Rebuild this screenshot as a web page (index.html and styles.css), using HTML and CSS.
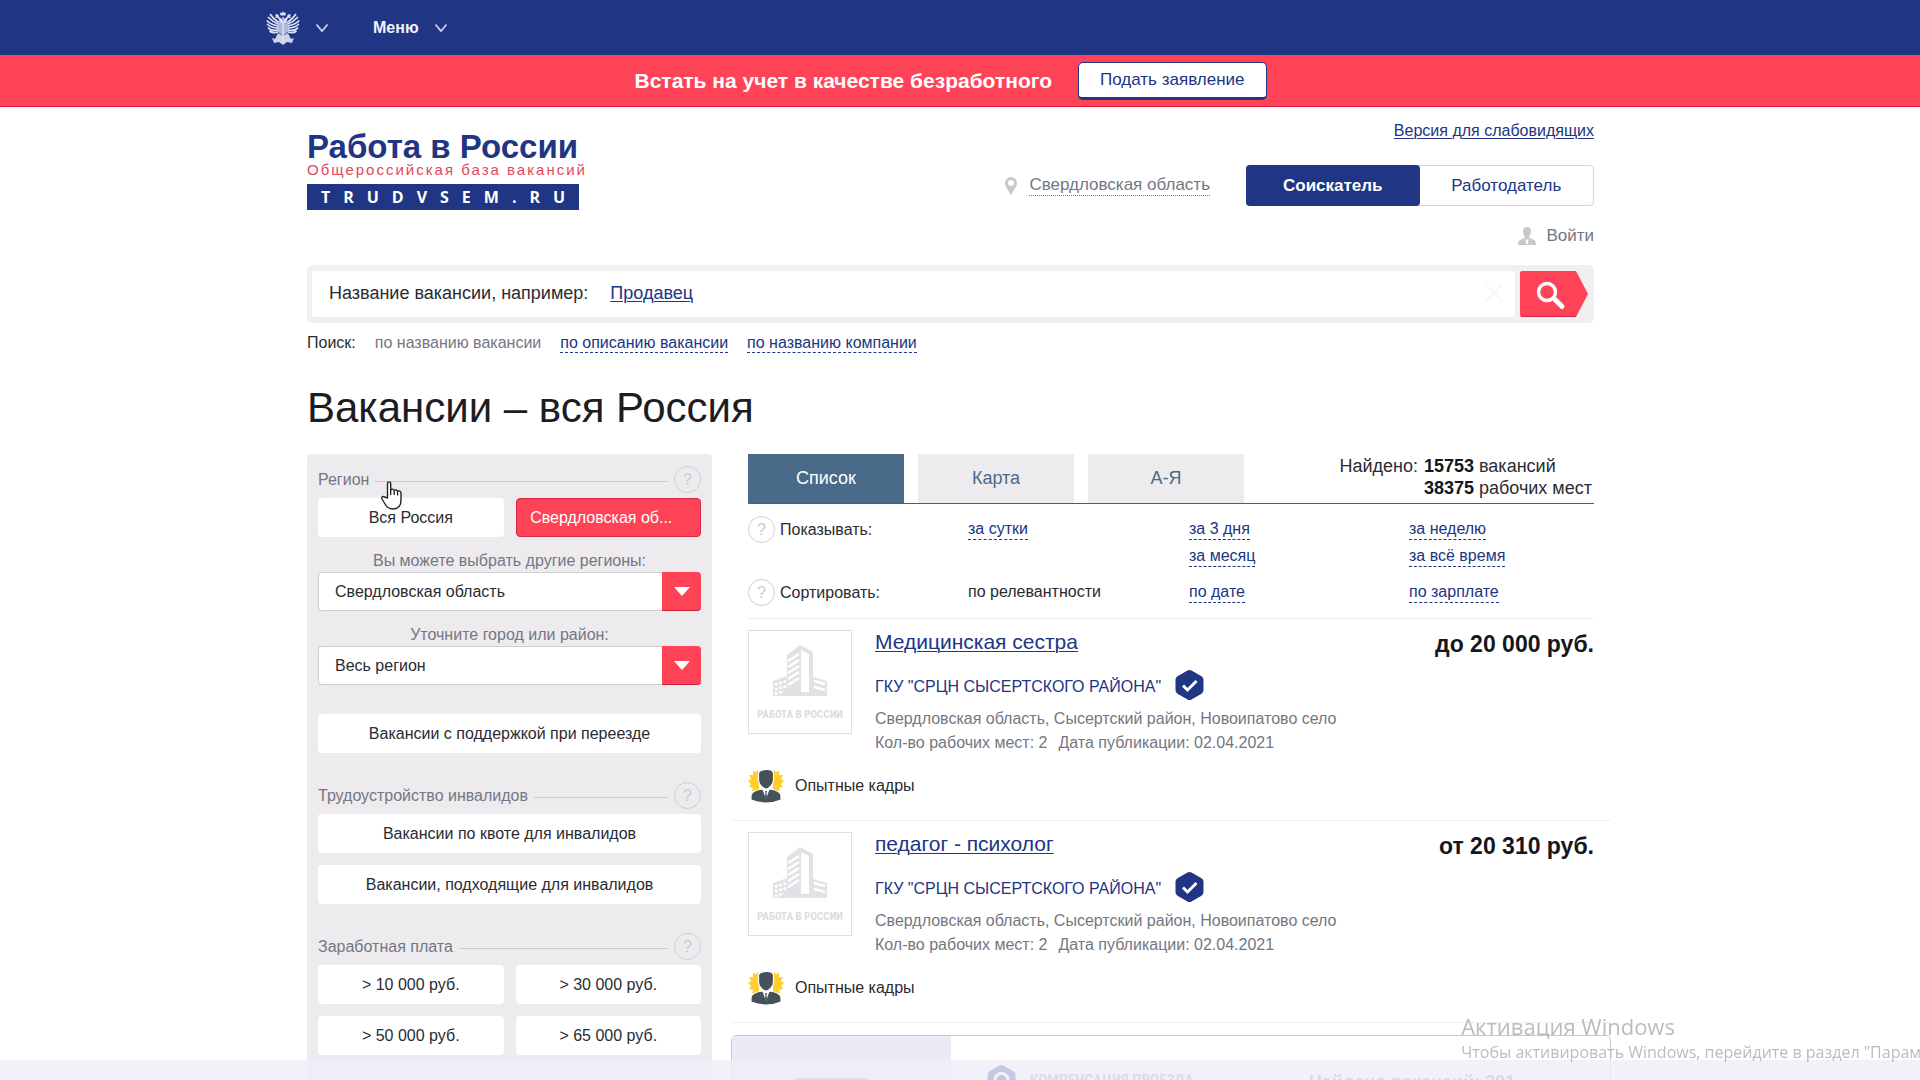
FILE: index.html
```html
<!DOCTYPE html>
<html lang="ru">
<head>
<meta charset="utf-8">
<meta name="viewport" content="width=device-width, initial-scale=1">
<title>Вакансии – вся Россия | Работа в России</title>
<link rel="stylesheet" href="styles.css">
</head>
<body>
<svg class="sprite" aria-hidden="true">
  <symbol id="chevron" viewBox="0 0 14 10"><path d="M1.500 1.500 7 8l5.500-6.500" fill="none" stroke="#c9cfea" stroke-width="1.800"/></symbol>
  <symbol id="building" viewBox="0 0 54 51">
    <path fill="#e3e1e6" d="M14 10 27 0l13 7v25l14 4v15H0V36l14-5z"/>
    <path fill="#fff" d="M28 5l8 4v38h-8z"/>
    <path stroke="#fff" stroke-width="2.400" d="M15 16l11-7M15 22l11-7M15 28l11-7M15 34l11-7M15 40l11-7"/>
    <path stroke="#fff" stroke-width="2.600" stroke-dasharray="2.800 1.600" d="M2 39.500l12-3.500M2 44.500l12-3.500M2 49l9-2.500"/>
    <path stroke="#fff" stroke-width="2.400" d="M41 36l11 3M41 42l11 3"/>
  </symbol>
  <symbol id="verified" viewBox="0 0 29 30">
    <path fill="#203584" d="M12.500.6a4 4 0 0 1 4 0l10 5.600a4 4 0 0 1 2 3.500v10.600a4 4 0 0 1-2 3.500l-10 5.600a4 4 0 0 1-4 0l-10-5.600a4 4 0 0 1-2-3.500V9.700a4 4 0 0 1 2-3.500z"/>
    <path fill="none" stroke="#fff" stroke-width="3" d="M8 15.500l4.500 4.500 9-9"/>
  </symbol>
  <symbol id="experienced" viewBox="0 0 36 34">
    <path fill="#ffd02b" d="M10 1l1 5v16H4l1-3-4-1 2-3-3-3 3-2-2-4h4V2l3 1zM26 1l-1 5v16h7l-1-3 4-1-2-3 3-3-3-2 2-4h-4V2l-3 1z"/>
    <path fill="#465259" stroke="#fff" stroke-width="1.200" d="M12 2q6-3 12-.5l1.500 2.500v7c0 4-4 9-7.500 9s-7.500-5-7.500-9V4zM3 31v-4c0-4 5-6 11-7l4 2 4-2c6 1 11 3 11 7v4q-14 6-30 0z"/>
    <path fill="#fff" d="M14.500 20.500h7L18 30z"/><path fill="#465259" d="M17 22h2l-.5 2 .5 4-1 2-1-2 .5-4z"/>
  </symbol>
</svg>

<header>
  <div class="topbar">
    <nav class="topbar__inner" aria-label="Главное меню">
      <button class="topbar__item" type="button" aria-label="Государственные порталы">
        <svg width="34" height="34" viewBox="0 0 34 34" fill="#dfe4f5">
          <path d="M17 0l1 2 2-.5-.5 3h-5L14 1.500l2 .5zM9 4l1.500-1 2 1 .5 2 3 2v4l-2-1-2-4-3-.500 1-1.500zM25 4l-1.500-1-2 1-.5 2-3 2v4l2-1 2-4 3-.500-1-1.500z"/>
          <path d="M12 10h10l1 10-6 5-6-5z" opacity=".75"/>
          <path d="M16.300 6h1.400v26h-1.400z"/>
          <path d="M12 22l-3 6-3-1 2 5 5-1 4 3 4-3 5 1 2-5-3 1-3-6-5 3z" opacity=".9"/>
          <g fill="none" stroke="#dfe4f5" stroke-width="1.700"><path d="M12 11C8 8 6 6 4 3M12 13C7 11 4 8 2 6M12 15C7 14 3 12 .8 9.500M12 17c-5 0-9-2-11-4M12 19c-4 1-8 0-10-2.500M12 21c-3 1-6 1-8.500-1"/><path d="M22 11c4-3 6-5 8-8M22 13c5-2 8-5 10-7M22 15c5-1 9-3 11.200-5.500M22 17c5 0 9-2 11-4M22 19c4 1 8 0 10-2.500M22 21c3 1 6 1 8.500-1"/></g>
        </svg>
        <svg width="14" height="10"><use href="#chevron"/></svg>
      </button>
      <button class="topbar__item" type="button">Меню <svg width="14" height="10"><use href="#chevron"/></svg></button>
    </nav>
  </div>
  <div class="notice">
    <strong class="notice__text">Встать на учет в качестве безработного</strong>
    <button class="notice__button" type="button">Подать заявление</button>
  </div>
</header>

<div class="page">
  <div class="masthead">
    <a class="logo" href="#">
      <span class="logo__title">Работа в России</span>
      <span class="logo__sub">Общероссийская база вакансий</span>
      <span class="logo__site">TRUDVSEM.RU</span>
    </a>
    <div class="account">
      <a class="link" href="#">Версия для слабовидящих</a>
      <div class="account__row">
        <a class="place" href="#">
          <svg width="12" height="18" viewBox="0 0 12 18"><path fill="#c8c8cc" fill-rule="evenodd" d="M6 0a6 6 0 0 1 6 6c0 3-3 7-6 12C3 13 0 9 0 6a6 6 0 0 1 6-6zm0 3a3 3 0 1 0 0 6 3 3 0 0 0 0-6z"/></svg>
          <span>Свердловская область</span>
        </a>
        <div class="role">
          <button class="role__item role__item--active" type="button">Соискатель</button>
          <button class="role__item" type="button">Работодатель</button>
        </div>
      </div>
      <a class="login" href="#">
        <svg width="18" height="18" viewBox="0 0 18 18"><path fill="#c8c8cc" d="M9 0c3 0 4 2 4 4.500S11 9 11 10.500l5 2.500q2 1 2 5H0q0-4 2-5l5-2.500C7 9 5 7 5 4.500S6 0 9 0z"/><path fill="#fff" d="M7.500 11.500L9 13l1.500-1.500L10 17H8z"/></svg>
        Войти
      </a>
    </div>
  </div>

  <form class="search" role="search">
    <div class="search__field">
      <label for="query">Название вакансии, например:</label>
      <a class="link" href="#">Продавец</a>
      <input id="query" type="text">
      <button class="search__clear" type="reset" aria-label="Очистить"><svg width="20" height="20" viewBox="0 0 20 20"><path d="M1 1l18 18M19 1L1 19" stroke="#ebebee" fill="none"/></svg></button>
    </div>
    <button class="search__submit" type="submit" aria-label="Найти">
      <svg width="68" height="46" viewBox="0 0 68 46"><path fill="#ff4356" d="M2 0h54l12 23-12 23H2q-2 0-2-2V2q0-2 2-2z"/><path stroke="#d92843" d="M1 45.500h55"/><circle cx="27" cy="21" r="8.500" fill="none" stroke="#fff" stroke-width="3.500"/><path stroke="#fff" stroke-width="5" stroke-linecap="round" d="M35 28.500l7 7"/></svg>
    </button>
  </form>
  <div class="scope">
    <span>Поиск:</span>
    <span class="scope__current">по названию вакансии</span>
    <a class="dashed" href="#">по описанию вакансии</a>
    <a class="dashed" href="#">по названию компании</a>
  </div>

  <h1>Вакансии – вся Россия</h1>

  <div class="columns">
    <aside class="filters">
      <section class="group">
        <h2 class="group__title"><span>Регион</span><button class="help" type="button">?</button></h2>
        <div class="pair">
          <button class="option" type="button">Вся Россия</button>
          <button class="option option--active" type="button">Свердловская об...</button>
        </div>
        <label class="caption" for="region">Вы можете выбрать другие регионы:</label>
        <div class="select"><select id="region"><option>Свердловская область</option></select><span class="select__arrow"></span></div>
        <label class="caption" for="city">Уточните город или район:</label>
        <div class="select"><select id="city"><option>Весь регион</option></select><span class="select__arrow"></span></div>
        <svg class="cursor" width="22" height="29" viewBox="0 0 22 29" aria-hidden="true"><path fill="#fff" stroke="#222" stroke-width="1.400" stroke-linejoin="round" d="M6.500 17V2.500C6.500.3 9.700.3 9.700 2.500V9c1-1.500 3.200-1 3.500.6 1-1.200 3-.7 3.400.8 1.200-1 3.400-.4 3.400 1.500V19c0 6-3 9-8 9-4 0-6-1.500-8-5l-3-5c-.7-1.800.8-3.200 2.600-2z"/><path d="M9.700 9v5M13.200 10v4M16.600 11v3.500" stroke="#222" stroke-width="1.300"/></svg>
      </section>
      <section class="group">
        <button class="option" type="button">Вакансии с поддержкой при переезде</button>
      </section>
      <section class="group">
        <h2 class="group__title"><span>Трудоустройство инвалидов</span><button class="help" type="button">?</button></h2>
        <div class="stack">
          <button class="option" type="button">Вакансии по квоте для инвалидов</button>
          <button class="option" type="button">Вакансии, подходящие для инвалидов</button>
        </div>
      </section>
      <section class="group">
        <h2 class="group__title"><span>Заработная плата</span><button class="help" type="button">?</button></h2>
        <div class="pair">
          <button class="option" type="button">&gt; 10 000 руб.</button>
          <button class="option" type="button">&gt; 30 000 руб.</button>
          <button class="option" type="button">&gt; 50 000 руб.</button>
          <button class="option" type="button">&gt; 65 000 руб.</button>
        </div>
      </section>
    </aside>

    <main>
      <div class="tabs">
        <button class="tab tab--active" type="button">Список</button>
        <button class="tab" type="button">Карта</button>
        <button class="tab" type="button">А-Я</button>
        <div class="found">
          <span>Найдено:</span>
          <span><b>15753</b> вакансий<br><b>38375</b> рабочих мест</span>
        </div>
      </div>

      <div class="sorting">
        <div class="sorting__row">
          <div class="sorting__label"><button class="help" type="button">?</button>Показывать:</div>
          <a class="dashed" href="#">за сутки</a>
          <a class="dashed" href="#">за 3 дня</a>
          <a class="dashed" href="#">за неделю</a>
          <a class="dashed sorting__third" href="#">за месяц</a>
          <a class="dashed" href="#">за всё время</a>
        </div>
        <div class="sorting__row">
          <div class="sorting__label"><button class="help" type="button">?</button>Сортировать:</div>
          <span>по релевантности</span>
          <a class="dashed" href="#">по дате</a>
          <a class="dashed" href="#">по зарплате</a>
        </div>
      </div>

      <article class="vacancy">
        <div class="vacancy__logo"><svg width="54" height="51"><use href="#building"/></svg><span>РАБОТА В РОССИИ</span></div>
        <div class="vacancy__info">
          <h3><a class="link" href="#">Медицинская сестра</a></h3>
          <div class="company"><a href="#">ГКУ "СРЦН СЫСЕРТСКОГО РАЙОНА"</a><svg width="29" height="30"><use href="#verified"/></svg></div>
          <p>Свердловская область, Сысертский район, Новоипатово село</p>
          <p class="facts"><span>Кол-во рабочих мест: 2</span><span>Дата публикации: 02.04.2021</span></p>
        </div>
        <strong class="salary">до 20 000 руб.</strong>
        <div class="tag"><svg width="36" height="34"><use href="#experienced"/></svg>Опытные кадры</div>
      </article>

      <article class="vacancy">
        <div class="vacancy__logo"><svg width="54" height="51"><use href="#building"/></svg><span>РАБОТА В РОССИИ</span></div>
        <div class="vacancy__info">
          <h3><a class="link" href="#">педагог - психолог</a></h3>
          <div class="company"><a href="#">ГКУ "СРЦН СЫСЕРТСКОГО РАЙОНА"</a><svg width="29" height="30"><use href="#verified"/></svg></div>
          <p>Свердловская область, Сысертский район, Новоипатово село</p>
          <p class="facts"><span>Кол-во рабочих мест: 2</span><span>Дата публикации: 02.04.2021</span></p>
        </div>
        <strong class="salary">от 20 310 руб.</strong>
        <div class="tag"><svg width="36" height="34"><use href="#experienced"/></svg>Опытные кадры</div>
      </article>

      <section class="promo">
        <div class="promo__side"><span class="promo__badge"></span></div>
        <div class="promo__body">
          <svg width="29" height="30" viewBox="0 0 29 30"><use href="#verified" width="29" height="30"/><circle cx="14.500" cy="15" r="8" fill="#fff"/><circle cx="14.500" cy="15" r="5" fill="#203584"/></svg>
          <span class="promo__title">КОМПЕНСАЦИЯ ПРОЕЗДА</span>
          <strong class="promo__count">Найдено вакансий: 201</strong>
        </div>
      </section>
    </main>
  </div>
</div>

<div class="haze"></div>
<div class="activation">
  <div class="activation__title">Активация Windows</div>
  <div>Чтобы активировать Windows, перейдите в раздел "Параметры".</div>
</div>
</body>
</html>
```
FILE: styles.css
```css
* { box-sizing: border-box; }

:root {
  --navy: #203584;
  --red: #ff4356;
  --panel: #edebee;
  --grey: #747783;
  --text: #2a2b33;
}

body {
  margin: 0;
  height: 100vh;
  overflow: hidden;
  background: #fff;
  color: var(--text);
  font: 16px/20px "Liberation Sans", Arial, sans-serif;
}

h1, h2, h3, p { margin: 0; font-weight: 400; }
a { color: var(--navy); text-decoration: none; }
button, input, select { font: inherit; color: inherit; border: 0; margin: 0; padding: 0; background: none; }
svg { display: block; flex: none; }
.sprite { position: absolute; width: 0; height: 0; }
.link { text-decoration: underline; text-underline-offset: 2px; text-decoration-thickness: 1px; }
.dashed { justify-self: start; border-bottom: 1px dashed var(--navy); }

/* Top bars */
.topbar { padding-right: 19px; background: var(--navy); }
.topbar__inner { display: flex; align-items: center; gap: 44px; max-width: 1369px; height: 55px; margin: 0 auto; }
.topbar__item { display: flex; align-items: center; gap: 15px; color: #f1f3fb; font-weight: 700; }

.notice {
  display: flex; justify-content: center; align-items: center; gap: 26px;
  height: 52px; padding-right: 19px;
  background: var(--red); border-bottom: 1px solid #d8193c;
}
.notice__text { color: #fff; font-size: 21px; line-height: 24px; }
.notice__button {
  height: 38px; padding: 0 21px;
  background: #fff; color: var(--navy); font-size: 17px;
  border: 1px solid var(--navy); border-bottom-width: 3px; border-radius: 5px;
}

.page { max-width: 1306px; margin: 0 auto; padding-right: 19px; width: 100%; }

/* Masthead */
.masthead { display: flex; justify-content: space-between; padding-top: 14px; }
.logo { display: flex; flex-direction: column; width: 272px; margin-top: 11px; white-space: nowrap; }
.logo__title { font-size: 33px; line-height: 30px; font-weight: 700; }
.logo__sub { color: #e0485c; font-size: 15px; line-height: 16px; letter-spacing: 2px; }
.logo__site {
  margin-top: 6px; padding-left: 13px; background: var(--navy); color: #fff;
  font: 700 16px/26px "Open Sans", sans-serif; letter-spacing: 13px; text-align: center;
}

.account { display: flex; flex-direction: column; align-items: flex-end; }
.account__row { display: flex; align-items: center; gap: 36px; margin: 24px 0 20px; }
.place { display: flex; align-items: center; gap: 12px; color: var(--grey); font-size: 17px; }
.place span { border-bottom: 1px dotted var(--grey); }
.role { display: flex; width: 348px; height: 41px; border: 1px solid #d5d5da; border-radius: 4px; }
.role__item { flex: 1; color: var(--navy); font-size: 17px; }
.role__item--active { margin: -1px 0 -1px -1px; background: var(--navy); color: #fff; font-weight: 700; border-radius: 4px; }
.login { display: flex; align-items: center; gap: 10px; color: var(--grey); font-size: 17px; }

/* Search */
.search { display: flex; gap: 5px; margin-top: 19px; padding: 6px 6px 6px 5px; background: #f1eff2; border-radius: 5px; }
.search__field { flex: 1; display: flex; align-items: center; height: 46px; padding: 0 11px 2px 17px; background: #fff; border-radius: 2px; font-size: 18px; }
.search__field .link { margin-left: 22px; }
.search__field input { flex: 1; min-width: 0; outline: 0; }
.scope { display: flex; gap: 19px; margin-top: 11px; line-height: 18px; }
.scope__current { color: var(--grey); }

h1 { margin: 31px 0 22px; color: #1c1d22; font-size: 42px; line-height: 48px; }

.columns { display: grid; grid-template-columns: 405px minmax(0, 1fr); gap: 36px; }

/* Sidebar */
.filters { display: flex; flex-direction: column; gap: 29px; padding: 12px 11px 40px; background: var(--panel); border-radius: 4px 4px 0 0; }
.group { position: relative; }
.group__title { display: flex; align-items: center; gap: 6px; margin-bottom: 5px; color: var(--grey); font-size: 16px; line-height: 27px; }
.group__title span { flex: 1; display: flex; align-items: center; gap: 6px; }
.group__title span::after { content: ""; flex: 1; height: 1px; margin-top: 4px; background: #ccccd1; }
.help { width: 27px; height: 27px; border: 1px solid #cfcfd4; border-radius: 50%; color: #cacad0; font-size: 16px; line-height: 20px; }
.pair { display: grid; grid-template-columns: 1fr 1fr; gap: 12px; }
.stack { display: grid; gap: 12px; }
.option { width: 100%; height: 39px; background: #fff; border-radius: 4px; white-space: nowrap; }
.option--active { padding-right: 14px; background: var(--red); color: #fff; border: 1px solid #d92843; }
.caption { display: block; margin-top: 13px; color: var(--grey); line-height: 22px; text-align: center; }
.select { display: flex; height: 39px; background: #fff; border: 1px solid #cfcdd2; border-right: 0; border-radius: 4px; }
.select select { flex: 1; min-width: 0; padding-left: 16px; appearance: none; }
.select__arrow { display: grid; place-items: center; width: 39px; margin: -1px 0; background: var(--red); border-bottom: 1px solid #c9203a; border-radius: 0 4px 4px 0; }
.select__arrow::before { content: ""; border: 8px solid transparent; border-top: 9px solid #fff; border-bottom: 0; }
.cursor { position: absolute; left: 63px; top: 15px; }

/* Results header */
.tabs { display: flex; gap: 14px; height: 50px; border-bottom: 1px solid #405f86; }
.tab { width: 156px; padding-bottom: 2px; background: var(--panel); color: #4a6a8a; font-size: 18px; }
.tab--active { background: #4a6a8a; color: #fff; }
.found { display: flex; gap: 6px; margin: 1px 2px 0 auto; font-size: 18px; line-height: 22px; }
.found b { color: #16171b; }

.sorting { display: grid; gap: 9px; padding: 12px 0; border-bottom: 1px solid #ececee; }
.sorting__row { display: grid; grid-template-columns: 220px 221px 220px 1fr; grid-auto-rows: 27px; align-items: start; line-height: 21px; }
.sorting__row > * { margin-top: 2px; }
.sorting__row > .sorting__label { display: flex; align-items: center; gap: 5px; margin-top: 0; }
.sorting__third { grid-column: 3; }

/* Vacancies */
.vacancy {
  display: grid; grid-template-columns: 104px minmax(0, 1fr) auto; column-gap: 23px; row-gap: 14px;
  margin: 0 -17px; padding: 11px 17px 17px; border-bottom: 1px solid #f0f0f2;
}
.vacancy__logo {
  display: flex; flex-direction: column; align-items: center; justify-content: space-between;
  height: 104px; padding: 14px 0 11px; border: 1px solid #dfdde2;
  color: #dddbe1; font: 700 11px/15px "Liberation Sans Narrow", "Roboto Condensed", "Liberation Sans", sans-serif; white-space: nowrap;
}
.vacancy h3 { font-size: 21px; line-height: 24px; }
.company { display: flex; align-items: center; gap: 14px; height: 30px; margin: 16px 0 7px; }
.company a { padding-top: 4px; }
.vacancy p { color: var(--grey); line-height: 24px; }
.facts { display: flex; gap: 11px; }
.salary { color: #16171b; font-size: 23px; line-height: 28px; }
.tag { grid-column: 1 / -1; display: flex; align-items: center; gap: 11px; }

.promo { display: flex; height: 180px; margin: 12px -17px 0; border: 1px solid #c9c8d0; border-radius: 5px; }
.promo__side { display: flex; justify-content: center; width: 219px; padding: 42px 32px 0 0; background: #eae9f6; }
.promo__badge { width: 76px; height: 60px; margin-left: 13px; background: #8d96c4; border-radius: 5px; }
.promo__body { flex: 1; display: flex; align-items: flex-start; padding: 29px 95px 0 36px; color: #8f93a8; line-height: 34px; }
.promo__title { margin-left: 14px; font: 700 15px/30px "Liberation Sans Narrow", "Roboto Condensed", "Liberation Sans", sans-serif; }
.promo__count { margin-left: auto; color: #8388b4; font-size: 18px; }

/* Overlays along the bottom edge of the window */
.haze { position: fixed; inset: auto 0 0; height: 20px; background: rgb(239 237 249 / 80%); }
.activation {
  position: fixed; left: 76%; right: 0; bottom: 18px; overflow: hidden;
  padding-left: 2px; color: #bcbbc1; font: 16px/20px "Open Sans", sans-serif; white-space: nowrap;
}
.activation__title { font-size: 22px; line-height: 32px; }
```
